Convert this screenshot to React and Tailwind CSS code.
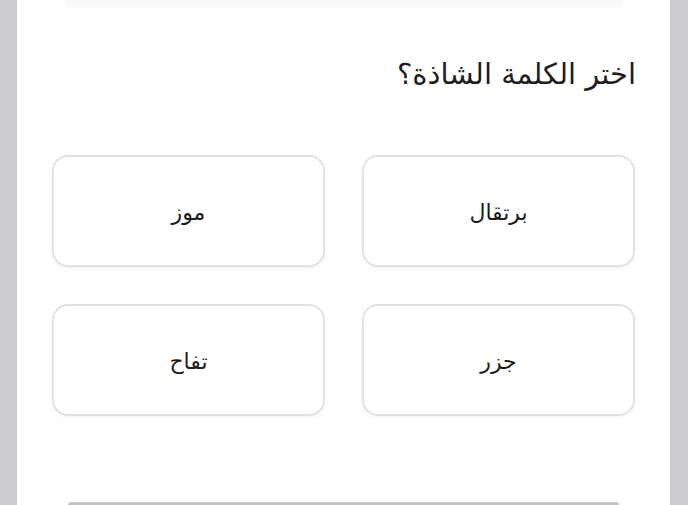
export default function App() {
  const options = ["برتقال", "موز", "جزر", "تفاح"];

  return (
    <div
      className="flex h-[505px] w-[688px] overflow-hidden bg-[#cbcbd0]"
      style={{ fontFamily: '"Noto Sans", "DejaVu Sans", sans-serif' }}
    >
      <div className="ml-[17px] flex w-[653px] flex-col bg-white">
        <div className="mx-[48px] h-[4px] rounded-b-md bg-[#f7f7f7] shadow-[0_2px_4px_rgba(0,0,0,0.04)]" />

        <h2
          dir="rtl"
          className="mt-[50px] pr-[34px] text-[29px] leading-[40px] text-[#1f1f1f]"
          style={{ fontFamily: '"DejaVu Sans", "Noto Sans", sans-serif' }}
        >
          اختر الكلمة الشاذة؟
        </h2>

        <div dir="rtl" className="mt-[61px] grid grid-cols-2 gap-x-[37px] gap-y-[37px] px-[35px]">
          {options.map((o) => (
            <button
              key={o}
              className="flex h-[112px] items-center justify-center rounded-[16px] border-2 border-[#e2e2e2] bg-white text-[22px] text-[#1c1c1c] shadow-[0_1px_4px_rgba(0,0,0,0.06)]"
            >
              {o}
            </button>
          ))}
        </div>

        <div className="flex-1" />
        <div className="mx-[51px] h-[3px] rounded-t-md bg-[#c4c4c4]" />
      </div>
    </div>
  );
}
